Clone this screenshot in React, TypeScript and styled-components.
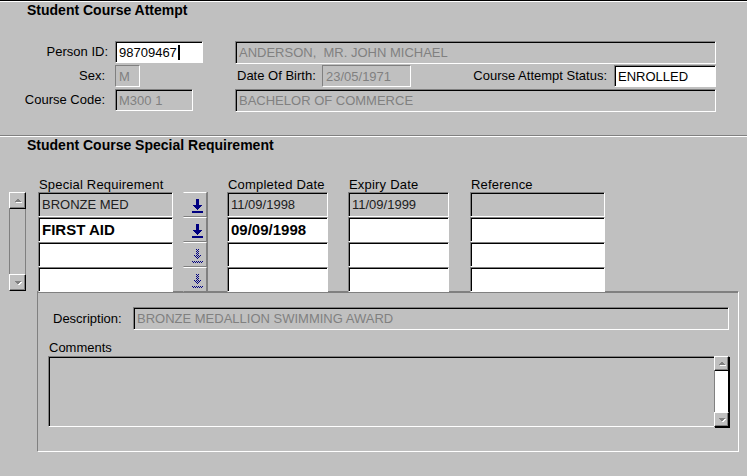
import React from 'react';
import styled, { createGlobalStyle, css } from 'styled-components';

const GlobalStyle = createGlobalStyle`
  html, body {
    margin: 0;
    padding: 0;
    background: #c0c0c0;
  }
  body {
    font-family: "Liberation Sans", Arial, sans-serif;
    font-size: 13px;
    color: #000;
  }
`;

const Screen = styled.div`
  width: 747px;
  height: 476px;
  box-sizing: border-box;
  overflow: hidden;
  background: #c0c0c0;
  border-top: 1px solid #000;
  box-shadow: inset 0 1px 0 #fff;
`;

const AttemptSection = styled.section`
  height: 134px;
  padding-top: 1px;
  box-sizing: border-box;
`;

const SectionTitle = styled.h2`
  margin: 0 0 0 27px;
  font-size: 14px;
  font-weight: bold;
  line-height: 16px;
`;

const FieldRows = styled.div`
  margin-top: 23px;
  display: flex;
  flex-direction: column;
  gap: 1px;
`;

const Row = styled.div`
  display: flex;
  align-items: flex-start;
  height: 23px;
`;

const Label = styled.div<{ $w: number; $right?: boolean; $pad?: number }>`
  width: ${p => p.$w}px;
  flex: none;
  box-sizing: border-box;
  text-align: ${p => (p.$right ? 'right' : 'left')};
  padding-right: ${p => p.$pad ?? 0}px;
  padding-top: 2px;
  line-height: 17px;
  white-space: nowrap;
`;

type Tone = 'input' | 'readonly' | 'query';

const Field = styled.div<{ $w: number; $h?: number; $tone: Tone; $bold?: boolean; $gap?: number; $thin?: boolean }>`
  flex: none;
  box-sizing: border-box;
  width: ${p => p.$w}px;
  height: ${p => p.$h ?? 22}px;
  margin-left: ${p => p.$gap ?? 0}px;
  border: 1px solid;
  border-color: #808080 #fff #fff #808080;
  box-shadow: ${p => (p.$thin ? 'none' : 'inset 1px 1px 0 #000')};
  padding: 0 0 0 3px;
  display: flex;
  align-items: center;
  white-space: nowrap;
  overflow: hidden;
  background: ${p => (p.$tone === 'input' ? '#fff' : '#c0c0c0')};
  color: ${p => (p.$tone === 'readonly' ? '#808080' : p.$tone === 'query' ? '#202020' : '#000')};
  ${p =>
    p.$bold &&
    css`
      font-weight: bold;
      font-size: 15px;
    `}
`;

const Caret = styled.span`
  display: inline-block;
  width: 2px;
  height: 15px;
  margin-left: 1px;
  background: #000;
`;

const Divider = styled.div`
  height: 0;
  border-top: 1px solid #808080;
  border-bottom: 1px solid #fff;
`;

const RequirementSection = styled.section`
  padding-top: 0;
`;

const ListArea = styled.div`
  display: flex;
  margin-top: 23px;
`;

const VScroll = styled.div`
  margin: 16px 0 0 9px;
  width: 17px;
  height: 99px;
  display: flex;
  flex-direction: column;
  flex: none;
`;

const ScrollButton = styled.div<{ $size: number }>`
  box-sizing: border-box;
  width: 100%;
  height: ${p => p.$size}px;
  flex: none;
  background: #c0c0c0;
  border: 1px solid;
  border-color: #fff #000 #000 #fff;
  box-shadow: inset -1px -1px 0 #808080;
  display: flex;
  align-items: center;
  justify-content: center;
`;

const ScrollTrack = styled.div<{ $white?: boolean }>`
  flex: 1;
  box-sizing: border-box;
  background: ${p => (p.$white ? '#fff' : '#c0c0c0')};
  border-left: 1px solid #808080;
  border-right: 1px solid ${p => (p.$white ? '#000' : '#808080')};
`;

const Grid = styled.div`
  margin-left: 12px;
  display: grid;
  grid-template-columns: 145px 44px 121px 122px 135px;
  grid-template-rows: 16px repeat(4, 25px);
`;

const ColHead = styled.div`
  line-height: 14px;
  padding: 2px 0 0 1px;
  white-space: nowrap;
  letter-spacing: 0.2px;
`;

const RowButton = styled.div`
  box-sizing: border-box;
  width: 24px;
  height: 25px;
  border: 1px solid;
  border-color: #fff #808080 #808080 #c0c0c0;
  box-shadow: 1px 0 0 #808080;
  display: flex;
  align-items: flex-end;
  justify-content: flex-start;
  padding: 0 0 3px 8px;
`;

const DetailPanel = styled.div`
  margin: -1px 0 0 37px;
  width: 702px;
  height: 161px;
  box-sizing: border-box;
  border: 1px solid;
  border-color: #808080 #fff #fff #808080;
  box-shadow: inset 0 1px 0 #808080;
  padding: 15px 0 0 10px;
`;

const DescriptionRow = styled.div`
  display: flex;
  align-items: center;
  margin-left: 5px;
`;

const CommentsLabel = styled.div`
  margin: 10px 0 0 1px;
  line-height: 16px;
`;

const CommentsBox = styled.div`
  width: 681px;
  height: 71px;
  box-sizing: border-box;
  display: flex;
`;

const CommentsText = styled.div`
  flex: 1;
  border-top: 1px solid #808080;
  border-left: 1px solid #808080;
  border-bottom: 1px solid #fff;
  box-shadow: inset 1px 1px 0 #000;
  background: #c0c0c0;
`;

const CommentsScroll = styled.div`
  width: 15px;
  display: flex;
  flex-direction: column;
  box-shadow: 1px 1px 0 #000;
`;

const Triangle = ({ up }: { up?: boolean }) => (
  <svg width="9" height="5" viewBox="0 0 9 5" shapeRendering="crispEdges">
    {up ? (
      <>
        <polygon points="4.5,0.5 8,4 1,4" fill="#fff" transform="translate(1,1)" />
        <polygon points="4.5,0.5 8,4 1,4" fill="#808080" />
      </>
    ) : (
      <>
        <polygon points="1,1 8,1 4.5,4.5" fill="#fff" transform="translate(1,1)" />
        <polygon points="1,1 8,1 4.5,4.5" fill="#808080" />
      </>
    )}
  </svg>
);

// arrow mask, one string per pixel row (11 wide)
const arrowMask = [
  '....###....',
  '....###....',
  '....###....',
  '....###....',
  '....###....',
  '....###....',
  '.#########.',
  '..#######..',
  '...#####...',
  '....###....',
  '.....#.....',
  '...........',
  '###########',
  '###########',
];

const DownArrow = ({ dithered }: { dithered?: boolean }) => {
  const cells: JSX.Element[] = [];
  arrowMask.forEach((line, y) => {
    line.split('').forEach((c, x) => {
      if (c !== '#') return;
      if (dithered && (x + y) % 2 === 1) return;
      cells.push(<rect key={`${x}-${y}`} x={x} y={y} width="1" height="1" />);
    });
  });
  return (
    <svg width="11" height="14" viewBox="0 0 11 14" shapeRendering="crispEdges">
      <g fill="#000080">{cells}</g>
    </svg>
  );
};

type ReqRow = { name: string; completed: string; expiry: string; ref: string; tone: Tone; bold?: boolean; enabled?: boolean };

const rows: ReqRow[] = [
  { name: 'BRONZE MED', completed: '11/09/1998', expiry: '11/09/1999', ref: '', tone: 'query', enabled: true },
  { name: 'FIRST AID', completed: '09/09/1998', expiry: '', ref: '', tone: 'input', bold: true, enabled: true },
  { name: '', completed: '', expiry: '', ref: '', tone: 'input' },
  { name: '', completed: '', expiry: '', ref: '', tone: 'input' },
];

export default function App() {
  return (
    <>
      <GlobalStyle />
      <Screen>
        <AttemptSection>
          <SectionTitle>Student Course Attempt</SectionTitle>
          <FieldRows>
            <Row>
              <Label $w={115} $right $pad={7}>Person ID:</Label>
              <Field $w={88} $tone="input">
                98709467<Caret />
              </Field>
              <Field $w={481} $h={23} $tone="readonly" $gap={32}>
                ANDERSON,&nbsp; MR. JOHN MICHAEL
              </Field>
            </Row>
            <Row>
              <Label $w={115} $right $pad={10}>Sex:</Label>
              <Field $w={25} $tone="readonly" $thin>M</Field>
              <Label $w={85} style={{ marginLeft: 97 }}>Date Of Birth:</Label>
              <Field $w={89} $tone="readonly" $thin>23/05/1971</Field>
              <Label $w={203} $right $pad={7}>Course Attempt Status:</Label>
              <Field $w={102} $tone="input">ENROLLED</Field>
            </Row>
            <Row>
              <Label $w={115} $right $pad={10}>Course Code:</Label>
              <Field $w={78} $tone="readonly">M300 1</Field>
              <Field $w={481} $h={23} $tone="readonly" $gap={42}>
                BACHELOR OF COMMERCE
              </Field>
            </Row>
          </FieldRows>
        </AttemptSection>
        <Divider />
        <RequirementSection>
          <SectionTitle>Student Course Special Requirement</SectionTitle>
          <ListArea>
            <VScroll>
              <ScrollButton $size={17}><Triangle up /></ScrollButton>
              <ScrollTrack />
              <ScrollButton $size={17}><Triangle /></ScrollButton>
            </VScroll>
            <Grid>
              <ColHead>Special Requirement</ColHead>
              <div />
              <ColHead>Completed Date</ColHead>
              <ColHead>Expiry Date</ColHead>
              <ColHead>Reference</ColHead>
              {rows.map((r, i) => (
                <React.Fragment key={i}>
                  <Field $w={135} $h={25} $tone={r.tone} $bold={r.bold}>{r.name}</Field>
                  <RowButton>
                    <DownArrow dithered={!r.enabled} />
                  </RowButton>
                  <Field $w={101} $h={25} $tone={r.tone} $bold={r.bold}>{r.completed}</Field>
                  <Field $w={101} $h={25} $tone={r.tone} $bold={r.bold}>{r.expiry}</Field>
                  <Field $w={135} $h={25} $tone={r.tone} $bold={r.bold}>{r.ref}</Field>
                </React.Fragment>
              ))}
            </Grid>
          </ListArea>
          <DetailPanel>
            <DescriptionRow>
              <Label $w={80} $pad={8} style={{ paddingTop: 0 }}>Description:</Label>
              <Field $w={596} $h={23} $tone="readonly">BRONZE MEDALLION SWIMMING AWARD</Field>
            </DescriptionRow>
            <CommentsLabel>Comments</CommentsLabel>
            <CommentsBox>
              <CommentsText />
              <CommentsScroll>
                <ScrollButton $size={15}><Triangle up /></ScrollButton>
                <ScrollTrack $white />
                <ScrollButton $size={15}><Triangle /></ScrollButton>
              </CommentsScroll>
            </CommentsBox>
          </DetailPanel>
        </RequirementSection>
      </Screen>
    </>
  );
}
